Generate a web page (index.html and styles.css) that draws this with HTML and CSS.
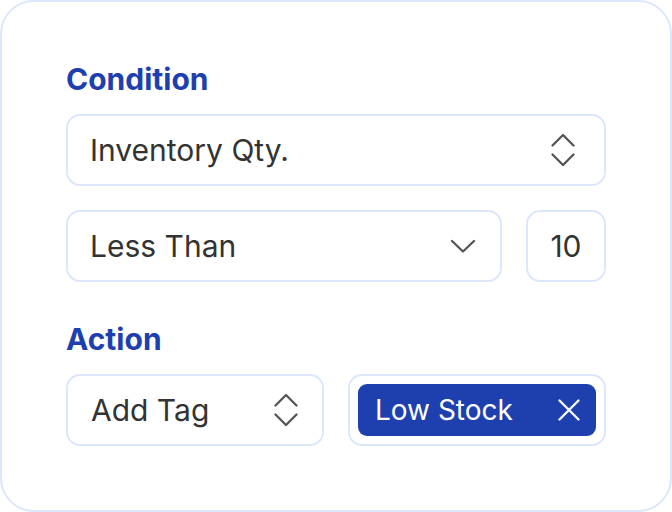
FILE: index.html
```html
<!DOCTYPE html>
<html>
<head>
<meta charset="utf-8">
<link rel="stylesheet" href="styles.css">
</head>
<body>
<div class="card">
  <div class="label">Condition</div>
  <div class="field">
    <span class="value">Inventory Qty.</span>
    <svg class="updown" width="24" height="34" viewBox="0 0 24 34"><path d="M1.5 12.5 L12 2 L22.5 12.5 M1.5 21.5 L12 32 L22.5 21.5" fill="none" stroke="#555" stroke-width="2.3" stroke-linecap="round" stroke-linejoin="round"/></svg>
  </div>
  <div class="row">
    <div class="field grow">
      <span class="value">Less Than</span>
      <svg class="down" width="26" height="14" viewBox="0 0 26 14"><path d="M2 2 L13 12.5 L24 2" fill="none" stroke="#555" stroke-width="2.3" stroke-linecap="round" stroke-linejoin="round"/></svg>
    </div>
    <div class="field num"><span class="value">10</span></div>
  </div>
  <div class="label action">Action</div>
  <div class="cols">
    <div class="field">
      <span class="value">Add Tag</span>
      <svg class="updown" width="24" height="34" viewBox="0 0 24 34"><path d="M1.5 12.5 L12 2 L22.5 12.5 M1.5 21.5 L12 32 L22.5 21.5" fill="none" stroke="#555" stroke-width="2.3" stroke-linecap="round" stroke-linejoin="round"/></svg>
    </div>
    <div class="field tagbox">
      <div class="chip">
        <span class="chip-text">Low Stock</span>
        <svg width="22" height="22" viewBox="0 0 22 22"><path d="M1.5 1.5 L20.5 20.5 M20.5 1.5 L1.5 20.5" fill="none" stroke="#fff" stroke-width="2.3" stroke-linecap="round"/></svg>
      </div>
    </div>
  </div>
</div>
</body>
</html>
```
FILE: styles.css
```css
html, body {
  margin: 0;
  padding: 0;
  background: #fff;
}
.card {
  box-sizing: border-box;
  width: 672px;
  height: 512px;
  border: 2px solid #dce7fb;
  border-radius: 34px;
  padding: 59px 64px 0 64px;
  font-family: Inter, "Noto Sans", sans-serif;
  display: flex;
  flex-direction: column;
}
.label {
  font-size: 30px;
  font-weight: 700;
  color: #1e40af;
  line-height: 36px;
  margin-bottom: 17px;
}
.label.action {
  margin-top: 39px;
  margin-bottom: 17px;
}
.field {
  box-sizing: border-box;
  height: 72px;
  border: 2px solid #dce7fb;
  border-radius: 14px;
  padding: 0 29px 0 22px;
  display: flex;
  align-items: center;
  justify-content: space-between;
}
.value {
  font-size: 30px;
  color: #333;
  line-height: 36px;
}
.row {
  display: flex;
  gap: 24px;
  margin-top: 24px;
}
.grow {
  flex: 1;
  padding-right: 24px;
}
.num {
  width: 80px;
  padding: 0;
  justify-content: center;
}
.cols {
  display: grid;
  grid-template-columns: 1fr 1fr;
  gap: 24px;
}
.cols .field:first-child {
  padding-right: 24px;
  padding-left: 23px;
}
.tagbox {
  padding: 8px;
}
.chip {
  box-sizing: border-box;
  width: 100%;
  height: 52px;
  background: #1e40af;
  border-radius: 9px;
  display: flex;
  align-items: center;
  justify-content: space-between;
  padding: 0 16px 0 17px;
}
.chip-text {
  font-size: 28px;
  color: #fff;
  line-height: 34px;
}
```
